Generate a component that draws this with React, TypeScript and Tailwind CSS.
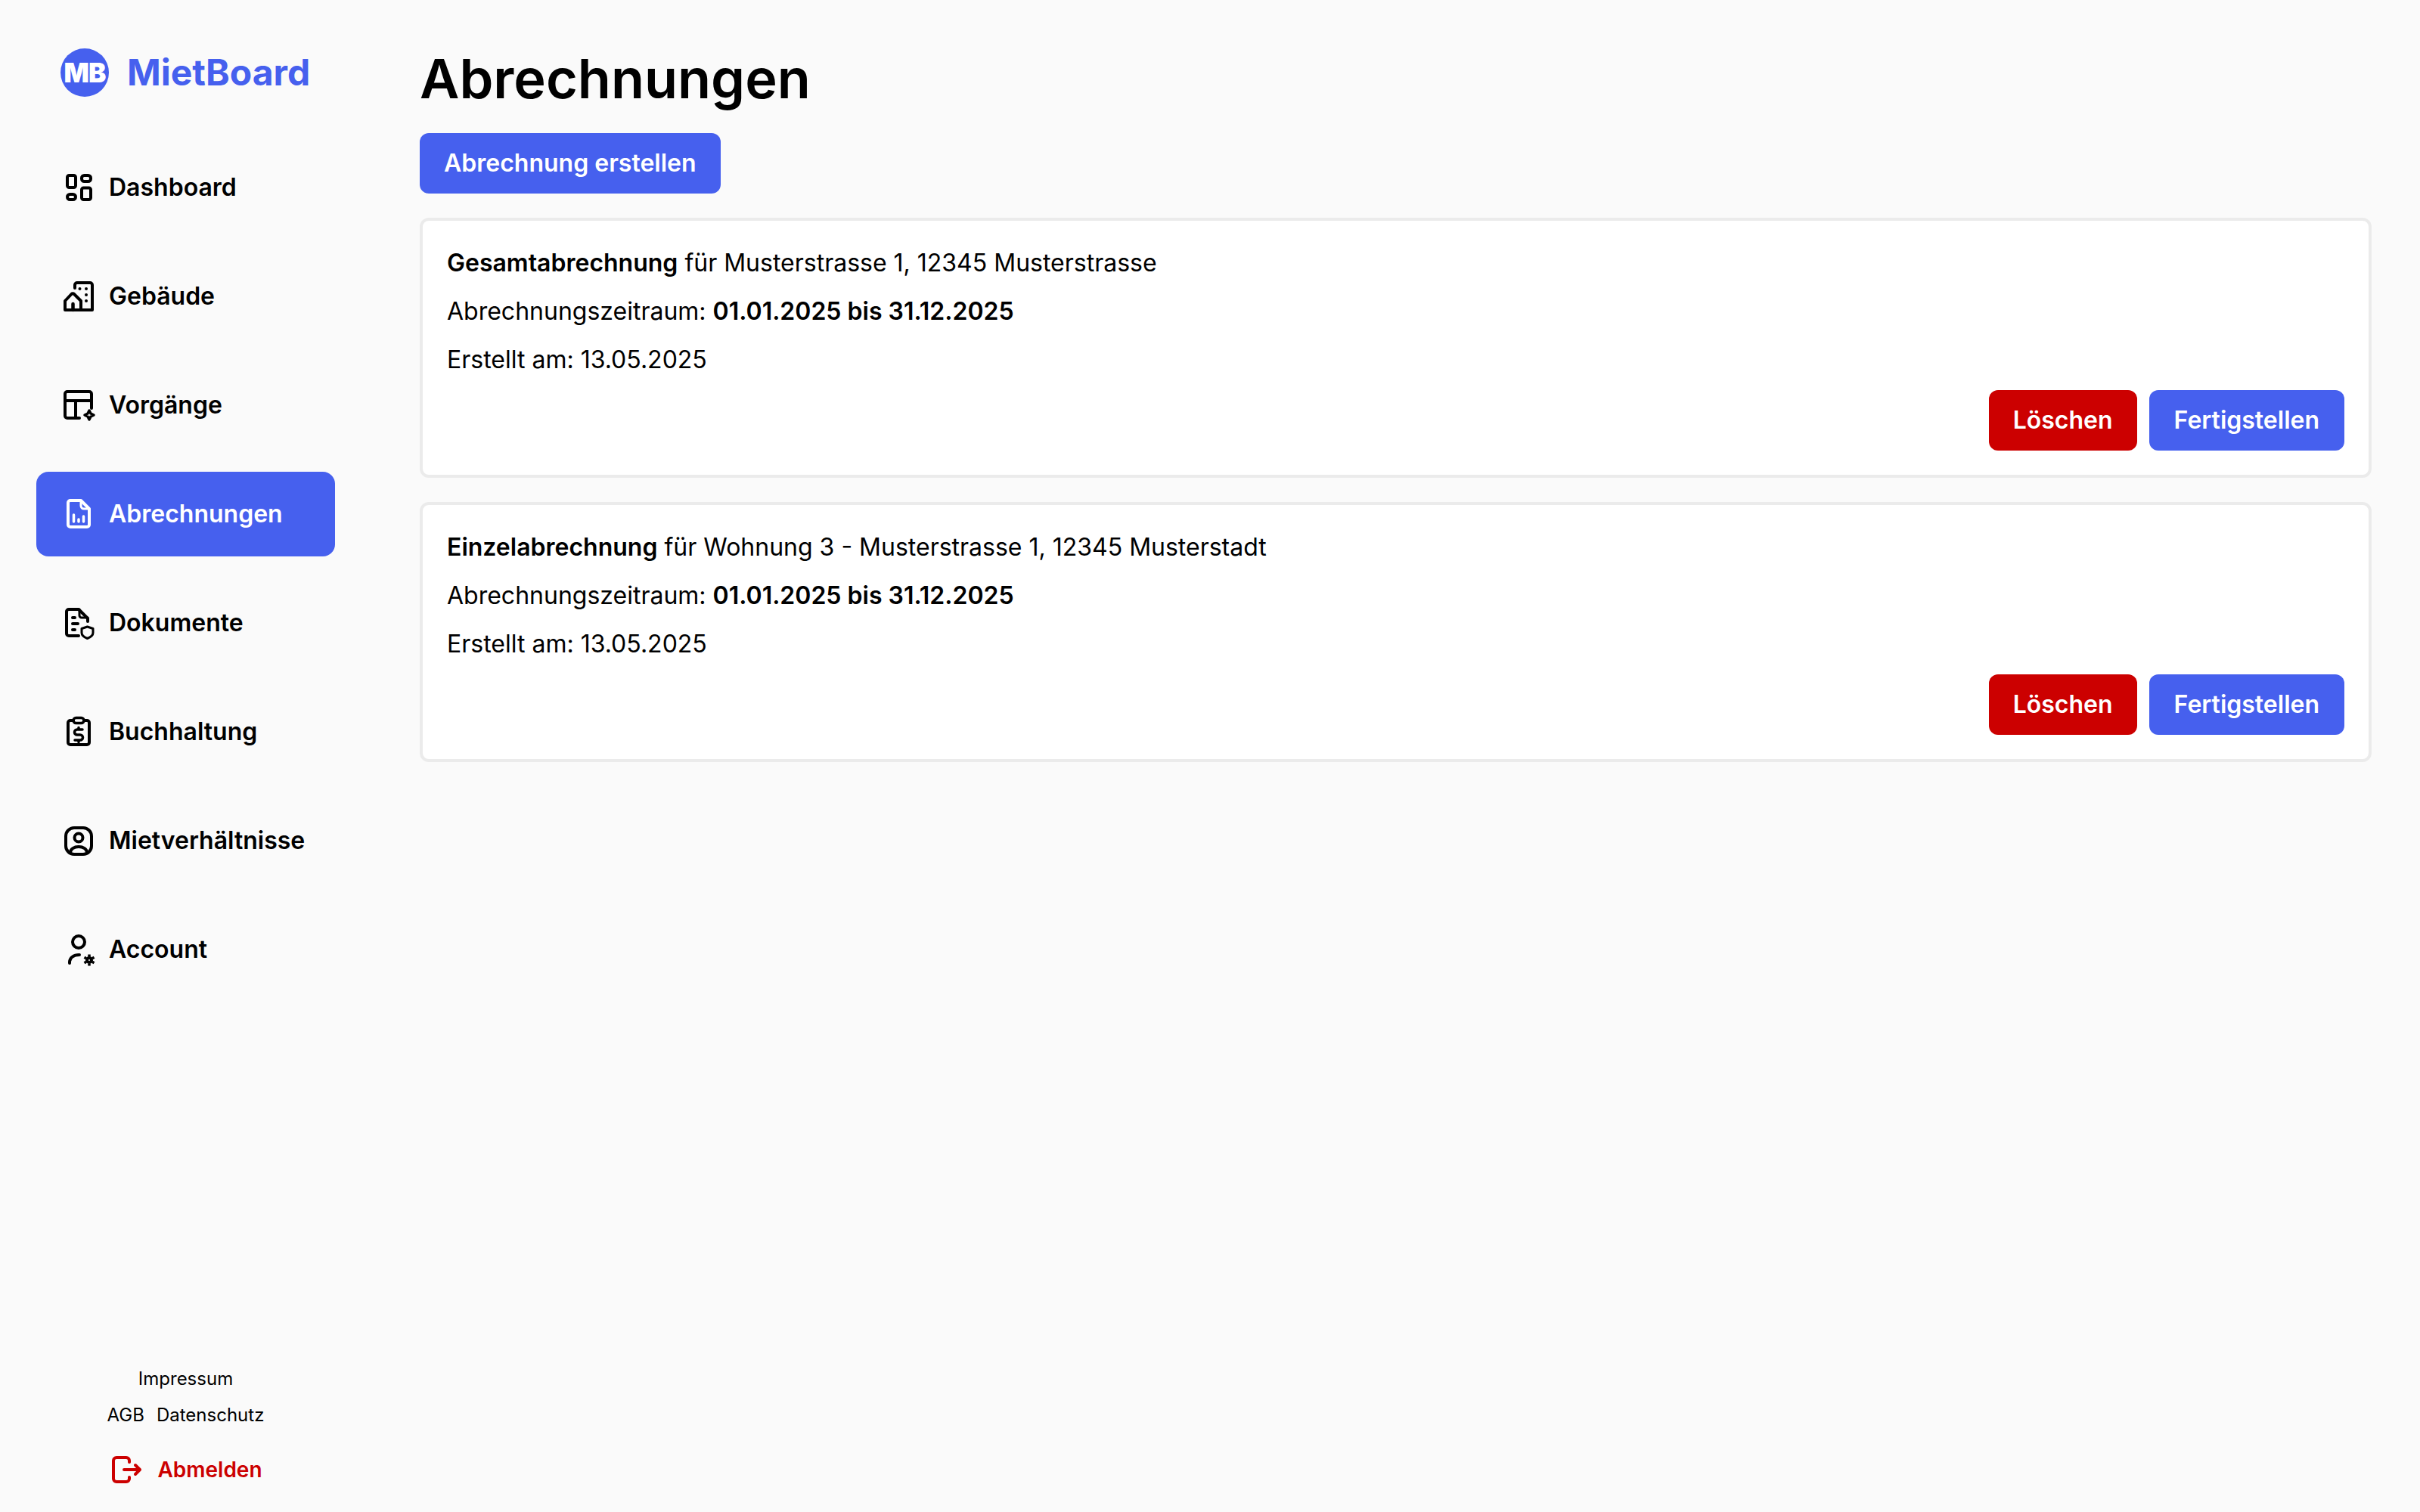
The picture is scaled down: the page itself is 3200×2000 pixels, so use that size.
import type { ReactNode } from "react";

function Icon({ children }: { children: ReactNode }) {
  return (
    <svg
      width="48"
      height="48"
      viewBox="0 0 48 48"
      fill="none"
      stroke="currentColor"
      strokeWidth="4"
      strokeLinecap="round"
      strokeLinejoin="round"
      className="shrink-0"
    >
      {children}
    </svg>
  );
}

const navItems: { label: string; active?: boolean; icon: ReactNode }[] = [
  {
    label: "Dashboard",
    icon: (
      <>
        <rect x="9" y="8" width="11" height="16" rx="2.500" />
        <rect x="28" y="8" width="12" height="8" rx="3.500" />
        <rect x="28" y="24.500" width="12" height="15.500" rx="2.500" />
        <rect x="9" y="33" width="11" height="7" rx="3.500" />
      </>
    ),
  },
  {
    label: "Gebäude",
    icon: (
      <>
        <path d="M19 13V9a3 3 0 0 1 3-3h17a3 3 0 0 1 3 3v33H6V30l8.500-9a2.500 2.500 0 0 1 3.500 0l9 9v12" />
        <path d="M16.500 42v-8" strokeWidth="4.500" />
        <path d="M25.500 14h.01M34 14h.01M34 22h.01M34 30h.01" />
      </>
    ),
  },
  {
    label: "Vorgänge",
    icon: (
      <>
        <path d="M25 41H9a3 3 0 0 1-3-3V9a3 3 0 0 1 3-3h29a3 3 0 0 1 3 3v19" />
        <path d="M6 18h35M20 18v23" />
        <path
          d="M38 31l2 4 4 2-4 2-2 4-2-4-4-2 4-2z"
          strokeWidth="3.500"
        />
      </>
    ),
  },
  {
    label: "Abrechnungen",
    active: true,
    icon: (
      <>
        <path d="M13 6h14l11 11v21a3 3 0 0 1-3 3H13a3 3 0 0 1-3-3V9a3 3 0 0 1 3-3z" />
        <path d="M27 6v7a4 4 0 0 0 4 4h7" strokeWidth="3" />
        <path d="M17.500 25v9M24 31v3M30.500 27v7" strokeWidth="3.500" />
      </>
    ),
  },
  {
    label: "Dokumente",
    icon: (
      <>
        <path d="M24 41H11a3 3 0 0 1-3-3V9a3 3 0 0 1 3-3h13l12 12v4" />
        <path d="M25 6v8a3 3 0 0 0 3 3h8" strokeWidth="3" />
        <path d="M16 17h3M16 25h7M16 33h3" />
        <path
          d="M28 31.500l7.500-2.500 7.500 2.500v5.500c0 3.500-3.500 6-7.500 7.500-4-1.500-7.500-4-7.500-7.500z"
          strokeWidth="3"
        />
      </>
    ),
  },
  {
    label: "Buchhaltung",
    icon: (
      <>
        <path d="M17 9h-4a3 3 0 0 0-3 3v26a3 3 0 0 0 3 3h22a3 3 0 0 0 3-3V12a3 3 0 0 0-3-3h-4" />
        <rect x="17" y="5.500" width="14" height="7" rx="3.500" strokeWidth="3.500" />
        <path
          d="M29 21h-7a3.500 3.500 0 0 0 0 7h4a3.500 3.500 0 0 1 0 7h-7M24 18.500v2.500M24 35v2.500"
          strokeWidth="3.500"
        />
      </>
    ),
  },
  {
    label: "Mietverhältnisse",
    icon: (
      <>
        <rect x="7" y="7" width="34" height="35" rx="11" />
        <circle cx="24" cy="20" r="5.500" />
        <path d="M13 40c0-5 5-8 11-8s11 3 11 8" />
      </>
    ),
  },
  {
    label: "Account",
    icon: (
      <>
        <circle cx="24" cy="14" r="8" />
        <path d="M12 42v-1c0-6 5-10 13-10" />
        <circle cx="38" cy="38" r="3" strokeWidth="4" />
        <path
          d="M38 30.500v3M38 42.500v3M31.500 34.250l2.500 1.500M42 40.250l2.500 1.500M31.500 41.750l2.500-1.500M42 35.750l2.500-1.500"
          strokeWidth="3.500"
          strokeLinecap="butt"
        />
      </>
    ),
  },
];

const bills = [
  { kind: "Gesamtabrechnung", rest: "für Musterstrasse 1, 12345 Musterstrasse" },
  { kind: "Einzelabrechnung", rest: "für Wohnung 3 - Musterstrasse 1, 12345 Musterstadt" },
];

function Bill({ kind, rest }: { kind: string; rest: string }) {
  return (
    <div className="rounded-xl border-4 border-[#ebebeb] bg-white p-[32px]">
      <div className="flex flex-col gap-[16px] text-[32px] leading-[48px] text-black">
        <p>
          <span className="font-semibold">{kind}</span> {rest}
        </p>
        <p>
          Abrechnungszeitraum: <span className="font-semibold">01.01.2025 bis 31.12.2025</span>
        </p>
        <p>Erstellt am: 13.05.2025</p>
      </div>
      <div className="mt-[16px] flex justify-end gap-[16px]">
        <button className="h-[80px] rounded-xl bg-[#cc0000] px-[32px] text-[32px] font-semibold text-white">
          Löschen
        </button>
        <button className="h-[80px] rounded-xl bg-[#4660ee] px-[33px] text-[32px] font-semibold text-white">
          Fertigstellen
        </button>
      </div>
    </div>
  );
}

export default function App() {
  return (
    <div className="flex h-[2000px] w-[3200px] bg-[#fafafa] font-['Inter',sans-serif] text-black">
      <aside className="flex w-[555px] shrink-0 flex-col pl-[48px] pr-[112px]">
        <div className="flex h-[192px] items-center gap-[24px] pl-[32px]">
          <div className="flex h-[64px] w-[64px] items-center justify-center rounded-full bg-[#4660ee] text-[35px] font-black tracking-[-1px] text-white">
            MB
          </div>
          <span className="text-[48px] font-bold text-[#4660ee]">MietBoard</span>
        </div>
        <nav className="flex flex-col gap-[32px]">
          {navItems.map((item) => (
            <div
              key={item.label}
              className={`flex h-[112px] items-center gap-[16px] rounded-2xl pl-[32px] text-[32px] font-semibold ${
                item.active ? "bg-[#4660ee] text-white" : "text-black"
              }`}
            >
              <Icon>{item.icon}</Icon>
              {item.label}
            </div>
          ))}
        </nav>
        <div className="mt-auto flex flex-col items-center pb-[32px] text-[24px] leading-[48px]">
          <span>Impressum</span>
          <div className="flex gap-[16px]">
            <span>AGB</span>
            <span>Datenschutz</span>
          </div>
          <div className="ml-[4px] mt-[24px] flex items-center gap-[20px] text-[28px] font-semibold text-[#cc0000]">
            <svg
              width="40"
              height="40"
              viewBox="0 0 40 40"
              fill="none"
              stroke="currentColor"
              strokeWidth="4"
              strokeLinecap="round"
              strokeLinejoin="round"
            >
              <path d="M23 10V8a4 4 0 0 0-4-4H6a4 4 0 0 0-4 4v24a4 4 0 0 0 4 4h13a4 4 0 0 0 4-4v-2" />
              <path d="M16 20h21M31 14l6 6-6 6" />
            </svg>
            Abmelden
          </div>
        </div>
      </aside>
      <main className="flex min-w-0 flex-1 flex-col pr-[64px] pt-[48px]">
        <h1 className="text-[72px] font-semibold leading-[112px]">Abrechnungen</h1>
        <button className="mt-[16px] h-[80px] w-fit rounded-xl bg-[#4660ee] px-[32px] text-[32px] font-semibold text-white">
          Abrechnung erstellen
        </button>
        <div className="mt-[32px] flex flex-col gap-[32px]">
          {bills.map((b) => (
            <Bill key={b.kind} {...b} />
          ))}
        </div>
      </main>
    </div>
  );
}
